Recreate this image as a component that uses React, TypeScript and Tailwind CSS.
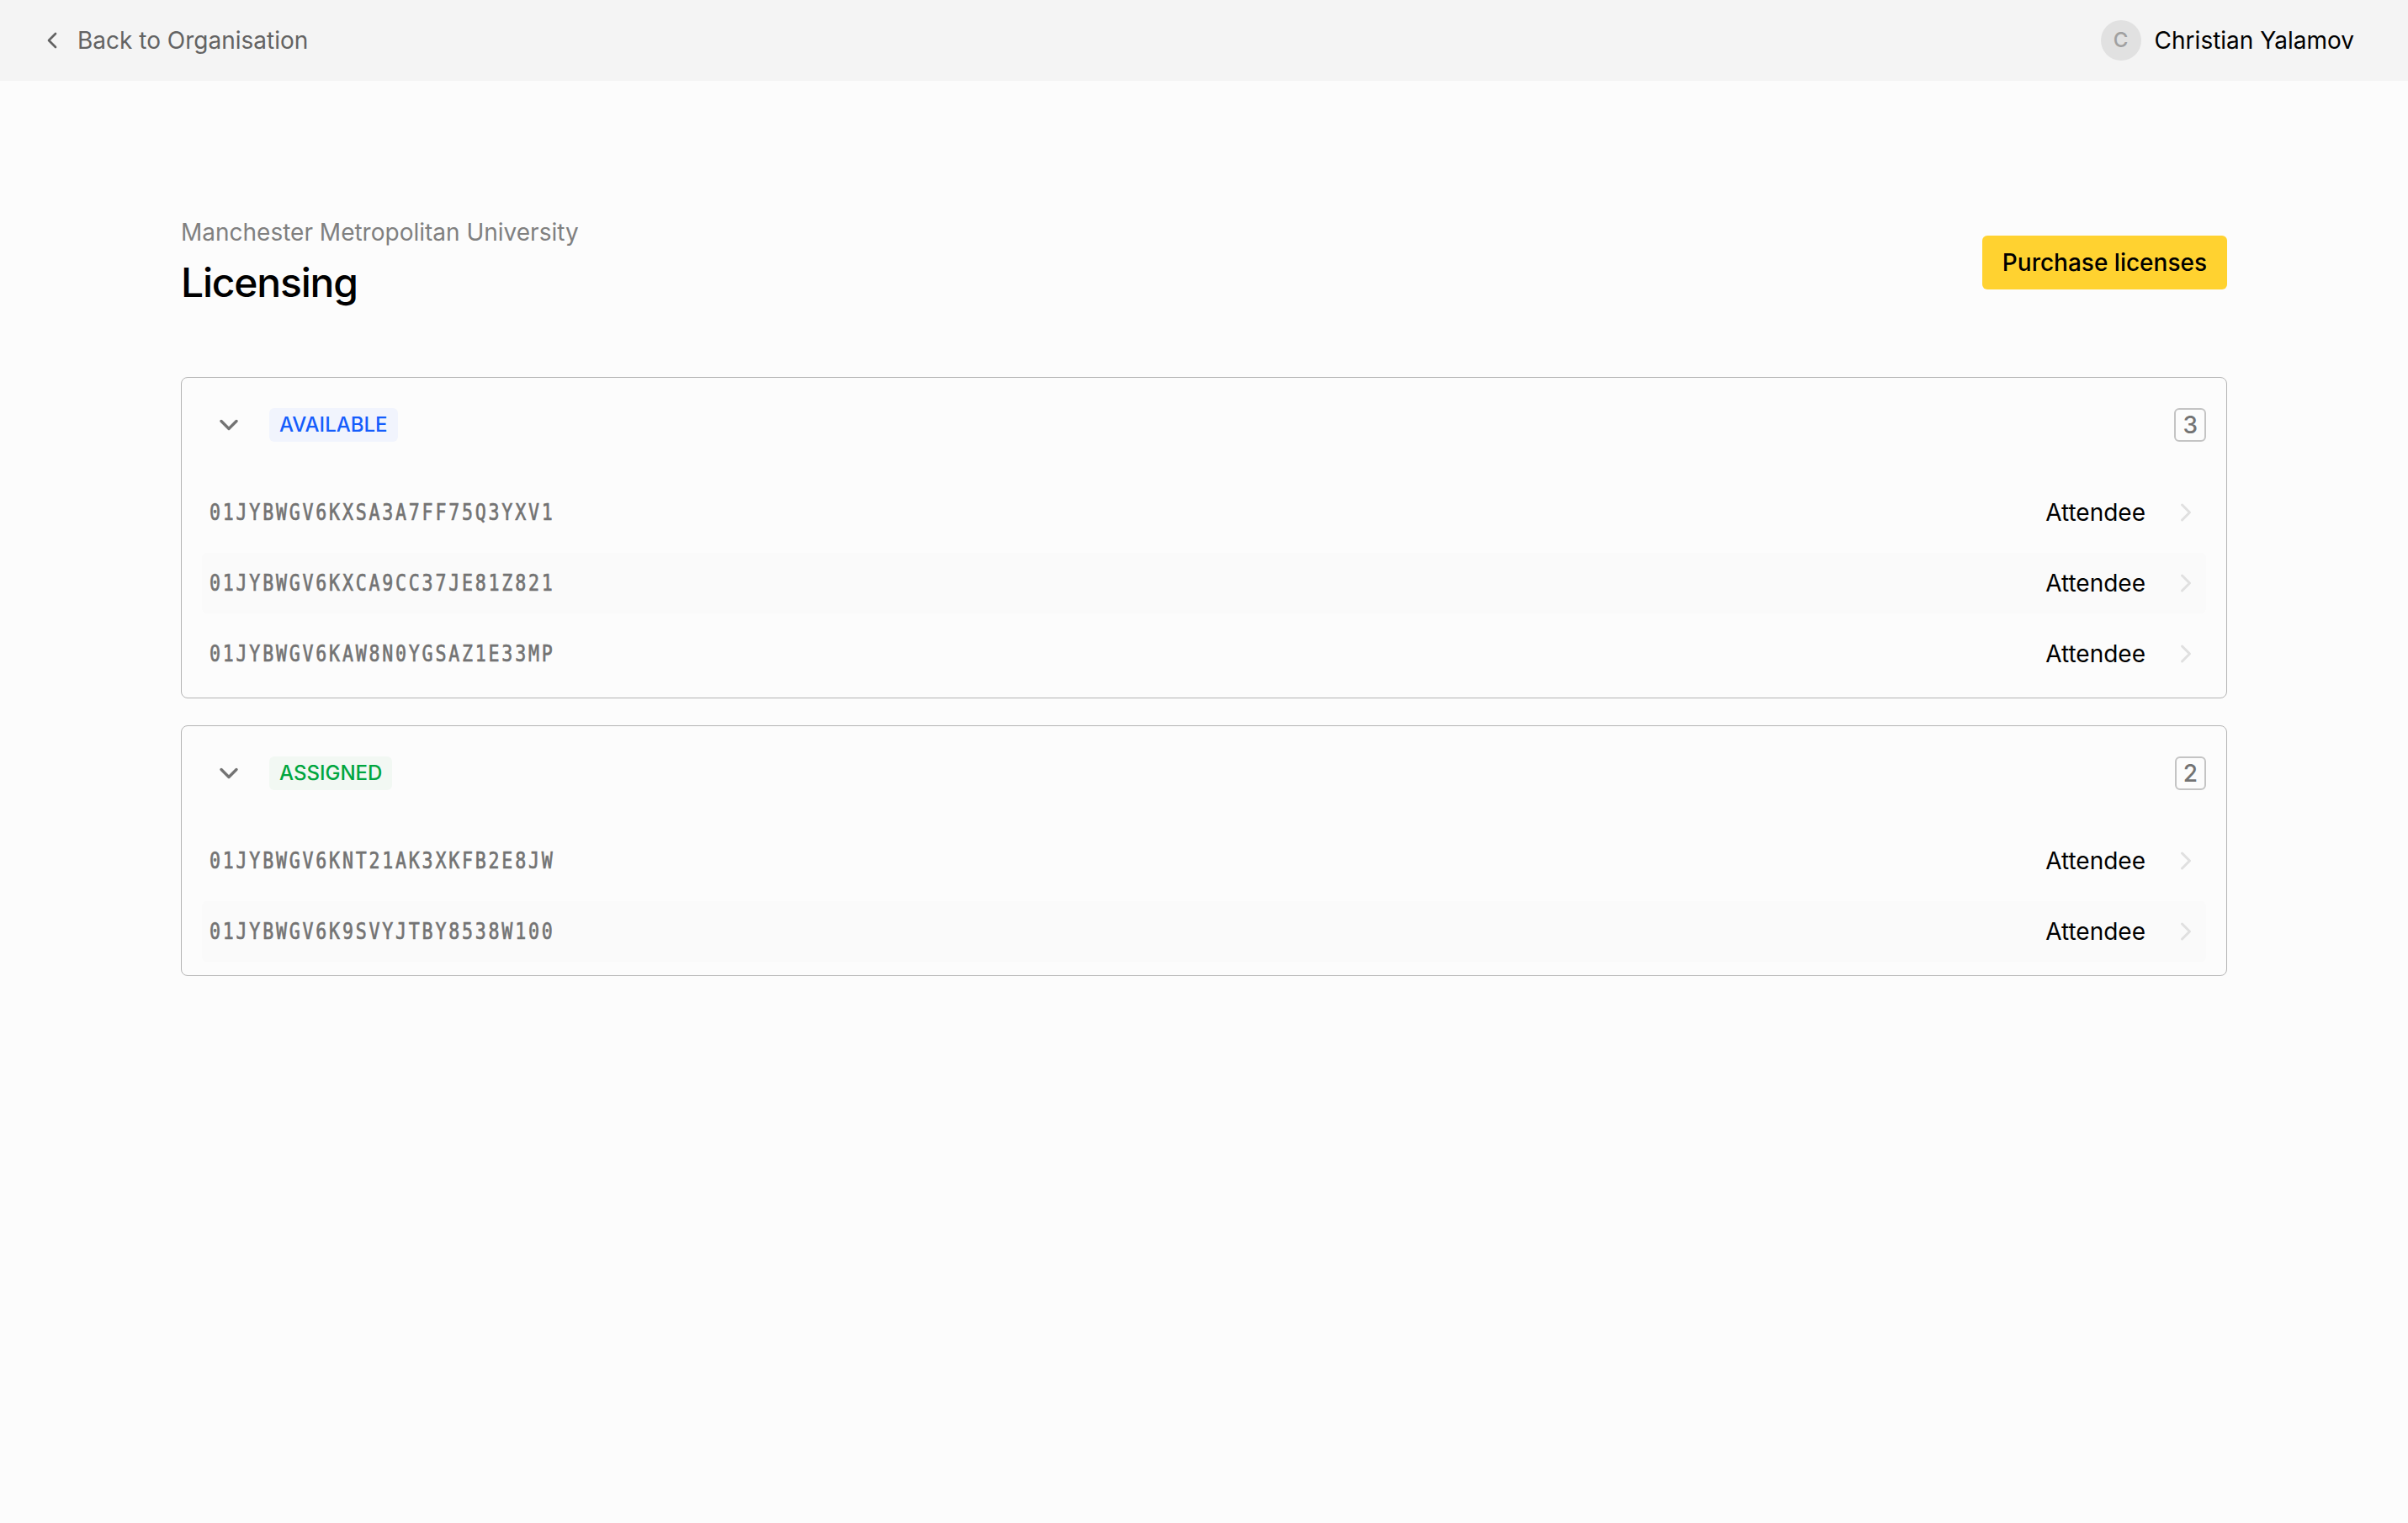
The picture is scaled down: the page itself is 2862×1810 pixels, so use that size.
import { ChevronDown, ChevronLeft, ChevronRight } from 'lucide-react'
import clsx from 'clsx'

interface LicenseGroup {
  label: string
  badgeClass: string
  licenses: { id: string; role: string }[]
}

const groups: LicenseGroup[] = [
  {
    label: 'AVAILABLE',
    badgeClass: 'bg-[#f1f4fd] text-[#155dfc]',
    licenses: [
      { id: '01JYBWGV6KXSA3A7FF75Q3YXV1', role: 'Attendee' },
      { id: '01JYBWGV6KXCA9CC37JE81Z821', role: 'Attendee' },
      { id: '01JYBWGV6KAW8N0YGSAZ1E33MP', role: 'Attendee' },
    ],
  },
  {
    label: 'ASSIGNED',
    badgeClass: 'bg-[#f2f8f3] text-[#00a63e]',
    licenses: [
      { id: '01JYBWGV6KNT21AK3XKFB2E8JW', role: 'Attendee' },
      { id: '01JYBWGV6K9SVYJTBY8538W100', role: 'Attendee' },
    ],
  },
]

function TopBar() {
  return (
    <header className="flex h-24 items-center justify-between bg-[#f4f4f4] pr-16 pl-[46px]">
      <a href="#" className="flex items-center gap-[14px] text-[#636363]">
        <ChevronLeft className="size-8" />
        <span>Back to Organisation</span>
      </a>
      <div className="flex items-center gap-4">
        <div className="flex size-12 items-center justify-center rounded-full bg-[#e1e1e1] text-2xl font-medium text-[#a0a0a0]">
          C
        </div>
        <span>Christian Yalamov</span>
      </div>
    </header>
  )
}

function LicenseRow({ id, role }: { id: string; role: string }) {
  return (
    <li className="flex h-[72px] items-center justify-between rounded-md pr-1.5 pl-[9px] even:bg-[#fafafa]">
      {/* Narrowed monospace for license ids */}
      <span className="origin-left scale-x-[0.8] font-['DejaVu_Sans_Mono'] text-[27px] tracking-[3.48px] whitespace-nowrap text-[#737373] [-webkit-text-stroke:0.7px_#737373]">
        {id}
      </span>
      <span className="flex items-center gap-[30px]">
        {role}
        <ChevronRight className="size-9 text-[#e0e0e0]" />
      </span>
    </li>
  )
}

function LicenseCard({ group }: { group: LicenseGroup }) {
  return (
    <section className="rounded-lg border border-[#b3b3b3] px-6 pb-4">
      <div className="flex h-28 items-center">
        <button className="mr-4 flex size-16 items-center justify-center text-[#737373]">
          <ChevronDown className="size-9" strokeWidth={2.25} />
        </button>
        <span className={clsx('flex h-10 items-center rounded-md px-3 text-2xl font-medium', group.badgeClass)}>
          {group.label}
        </span>
        <span className="ml-auto flex h-10 items-center rounded-md border-2 border-[#c4c4c4] px-2 font-medium text-[#737373]">
          {group.licenses.length}
        </span>
      </div>
      <ul className="mt-3 flex flex-col gap-3">
        {group.licenses.map((license) => (
          <LicenseRow key={license.id} {...license} />
        ))}
      </ul>
    </section>
  )
}

export default function App() {
  return (
    <div className="min-h-screen bg-[#fcfcfc] font-['Inter',sans-serif] text-[28px] leading-10 text-black">
      <TopBar />
      <main className="mx-auto w-[2432px] pt-40">
        <div className="mb-20 flex items-center justify-between">
          <div className="flex flex-col gap-2">
            <p className="text-[#808080]">Manchester Metropolitan University</p>
            <h1 className="text-5xl leading-16 font-medium tracking-tight">Licensing</h1>
          </div>
          <button className="h-16 rounded-md bg-[#ffd230] px-6 font-medium">Purchase licenses</button>
        </div>
        <div className="flex flex-col gap-8">
          {groups.map((group) => (
            <LicenseCard key={group.label} group={group} />
          ))}
        </div>
      </main>
    </div>
  )
}
